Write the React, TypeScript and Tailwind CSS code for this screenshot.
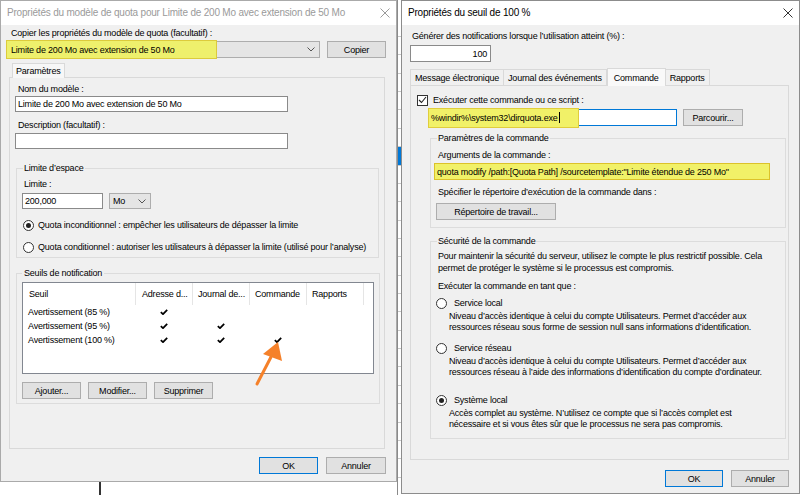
import type { ReactNode } from "react";

function CloseX({ color }: { color: string }) {
  return (
    <svg width="10" height="10" viewBox="0 0 10 10" className="ml-auto">
      <path d="M0.5 0.5 L9.5 9.5 M9.5 0.5 L0.5 9.5" stroke={color} strokeWidth="1" />
    </svg>
  );
}

function Chevron() {
  return (
    <svg width="8" height="5" viewBox="0 0 8 5">
      <path d="M0.5 0.5 L4 4 L7.5 0.5" stroke="#555" strokeWidth="1" fill="none" />
    </svg>
  );
}

function Tick() {
  return (
    <svg width="8" height="6" viewBox="0 0 8 6">
      <path d="M0.8 3.2 L3 5.2 L7.2 0.8" stroke="#000" strokeWidth="1.7" fill="none" />
    </svg>
  );
}

function Btn({ children, w, primary }: { children: ReactNode; w: string; primary?: boolean }) {
  return (
    <div
      className={`${w} h-[17px] flex items-center justify-center bg-[#e1e1e1] border ${
        primary ? "border-[#0078d7]" : "border-[#adadad]"
      }`}
    >
      {children}
    </div>
  );
}

function Radio({ on }: { on?: boolean }) {
  return (
    <span className="w-[11px] h-[11px] rounded-full border border-[#333] bg-white flex items-center justify-center shrink-0">
      {on && <span className="w-[5px] h-[5px] rounded-full bg-[#222]" />}
    </span>
  );
}

const runAs = [
  {
    label: "Service local",
    desc: [
      "Niveau d’accès identique à celui du compte Utilisateurs. Permet d’accéder aux",
      "ressources réseau sous forme de session null sans informations d’identification.",
    ],
    on: false,
    mt: "mt-[5px]",
  },
  {
    label: "Service réseau",
    desc: [
      "Niveau d’accès identique à celui du compte Utilisateurs. Permet d’accéder aux",
      "ressources réseau à l’aide des informations d’identification du compte d’ordinateur.",
    ],
    on: false,
    mt: "mt-[9px]",
  },
  {
    label: "Système local",
    desc: [
      "Accès complet au système. N’utilisez ce compte que si l’accès complet est",
      "nécessaire et si vous êtes sûr que le processus ne sera pas compromis.",
    ],
    on: true,
    mt: "mt-[16px]",
  },
];

export default function App() {
  return (
    <div className="relative w-[800px] h-[495px] bg-white flex overflow-hidden font-['Liberation_Sans',Arial,sans-serif] text-[9px] leading-[12px] tracking-[-0.2px] text-black">
      {/* left dialog */}
      <div className="flex flex-col shrink-0">
        <div className="w-[397px] h-[482px] border border-[#aaaaaa] bg-[#f0f0f0] flex flex-col">
          <div className="h-[24px] bg-white flex items-center pl-[6px] pr-[6px] text-[10px] tracking-[-0.2px] text-[#9a9a9a]">
            <span>Propriétés du modèle de quota pour Limite de 200 Mo avec extension de 50 Mo</span>
            <CloseX color="#9a9a9a" />
          </div>
          <div className="pl-[6px] flex flex-col">
            <div className="mt-[2px] pl-[4px]">Copier les propriétés du modèle de quota (facultatif) :</div>
            <div className="mt-[2px] flex">
              <div className="relative w-[313px] h-[17px] bg-[#e5e5e5] border border-[#adadad] flex items-center pr-[4px]">
                <span className="absolute left-[-2px] top-[-2px] w-[211px] h-[19px] bg-[#eef06c] border border-[#dccb3c]" />
                <span className="relative pl-[3px]">Limite de 200 Mo avec extension de 50 Mo</span>
                <span className="ml-auto">
                  <Chevron />
                </span>
              </div>
              <div className="ml-[7px]">
                <Btn w="w-[59px]">Copier</Btn>
              </div>
            </div>

            {/* tabs */}
            <div className="mt-[5px] ml-[5px] flex">
              <div className="h-[15px] px-[3px] flex items-center bg-[#f7f7f7] border border-b-0 border-[#d9d9d9] -mb-px relative z-10">
                Paramètres
              </div>
            </div>
            <div className="ml-[2px] w-[376px] h-[372px] border border-[#d9d9d9] flex flex-col pl-[5px]">
              <div className="mt-[5px] pl-[3px]">Nom du modèle :</div>
              <div className="mt-[1px] w-[273px] h-[16px] bg-white border border-[#8a8a8a] flex items-center pl-[2px]">
                Limite de 200 Mo avec extension de 50 Mo
              </div>
              <div className="mt-[7px] pl-[3px]">Description (facultatif) :</div>
              <div className="mt-[2px] w-[273px] h-[16px] bg-white border border-[#8a8a8a]" />

              <fieldset className="mt-[13px] ml-[1px] w-[363px] h-[96px] border border-[#dcdcdc] px-[6px]">
                <legend className="px-[1px]">Limite d’espace</legend>
                <div className="mt-[4px] pl-[1px]">Limite :</div>
                <div className="mt-[3px] -ml-[1px] flex">
                  <div className="w-[81px] h-[16px] bg-white border border-[#8a8a8a] flex items-center pl-[2px]">
                    200,000
                  </div>
                  <div className="ml-[6px] w-[42px] h-[16px] bg-[#e5e5e5] border border-[#adadad] flex items-center pl-[3px] pr-[4px]">
                    Mo
                    <span className="ml-auto">
                      <Chevron />
                    </span>
                  </div>
                </div>
                <div className="mt-[10px] flex items-center gap-[4px]">
                  <Radio on />
                  <span>Quota inconditionnel : empêcher les utilisateurs de dépasser la limite</span>
                </div>
                <div className="mt-[10px] flex items-center gap-[4px]">
                  <Radio />
                  <span>Quota conditionnel : autoriser les utilisateurs à dépasser la limite (utilisé pour l’analyse)</span>
                </div>
              </fieldset>

              <fieldset className="mt-[9px] ml-[1px] w-[363px] h-[137px] border border-[#dcdcdc] px-[5px]">
                <legend className="px-[2px]">Seuils de notification</legend>
                <div className="mt-[3px] w-[352px] h-[92px] bg-white border border-[#828790] flex flex-col">
                  <div className="h-[22px] flex">
                    <div className="w-[113px] pl-[6px] flex items-center border-r border-[#e5e5e5]">Seuil</div>
                    <div className="w-[57px] pl-[6px] flex items-center border-r border-[#e5e5e5]">Adresse d...</div>
                    <div className="w-[57px] pl-[5px] flex items-center border-r border-[#e5e5e5]">Journal de...</div>
                    <div className="w-[57px] pl-[5px] flex items-center border-r border-[#e5e5e5]">Commande</div>
                    <div className="w-[57px] pl-[5px] flex items-center border-r border-[#e5e5e5]">Rapports</div>
                  </div>
                  {[
                    ["Avertissement (85 %)", true, false, false],
                    ["Avertissement (95 %)", true, true, false],
                    ["Avertissement (100 %)", true, true, true],
                  ].map(([label, a, b, c], i) => (
                    <div key={i} className="h-[14px] flex items-center">
                      <div className="w-[113px] pl-[5px]">{label}</div>
                      <div className="w-[57px] pl-[24px]">{a && <Tick />}</div>
                      <div className="w-[57px] pl-[24px]">{b && <Tick />}</div>
                      <div className="w-[57px] pl-[24px]">{c && <Tick />}</div>
                    </div>
                  ))}
                </div>
                <div className="mt-[8px] flex gap-[7px]">
                  <Btn w="w-[59px]">Ajouter...</Btn>
                  <Btn w="w-[59px]">Modifier...</Btn>
                  <Btn w="w-[59px]">Supprimer</Btn>
                </div>
              </fieldset>
            </div>
            <div className="mt-[8px] ml-[2px] w-[377px] flex justify-end gap-[8px]">
              <Btn w="w-[59px]" primary>
                OK
              </Btn>
              <Btn w="w-[60px]">Annuler</Btn>
            </div>
          </div>
        </div>
        <div className="flex-1 relative">
          <div className="absolute left-[99px] top-0 w-[2px] h-full bg-[#333]" />
        </div>
      </div>

      {/* background window strip */}
      <div className="w-[4px] h-[495px] shrink-0 border-l border-[#8a8a8a] flex flex-col pt-[36px]">
        {Array.from({ length: 25 }).map((_, i) => (
          <div key={i} className={`h-[19.5px] border-t border-[#c8c8c8] ${i === 6 ? "bg-[#0078d7]" : ""}`} />
        ))}
      </div>

      {/* right dialog */}
      <div className="w-[399px] h-[494px] shrink-0 border border-[#8c8c8c] bg-[#f0f0f0] flex flex-col">
        <div className="h-[24px] bg-white flex items-center pl-[6px] pr-[6px] text-[10px] tracking-[-0.2px]">
          <span>Propriétés du seuil de 100 %</span>
          <CloseX color="#333" />
        </div>
        <div className="pl-[8px] flex flex-col">
          <div className="mt-[5px] pl-[2px]">Générer des notifications lorsque l’utilisation atteint (%) :</div>
          <div className="mt-[3px] w-[81px] h-[17px] bg-white border border-[#8a8a8a] flex items-center justify-end pr-[3px]">
            100
          </div>

          {/* tabs */}
          <div className="mt-[5px] h-[18px] flex items-end">
            <div className="h-[16px] px-[4px] flex items-center border border-b-0 border-[#d9d9d9] bg-[#f0f0f0]">
              Message électronique
            </div>
            <div className="h-[16px] px-[4px] flex items-center border border-b-0 border-l-0 border-[#d9d9d9] bg-[#f0f0f0]">
              Journal des événements
            </div>
            <div className="h-[18px] px-[6px] flex items-center border border-b-0 border-[#d9d9d9] bg-[#f9f9f9] -mb-px relative z-10">
              Commande
            </div>
            <div className="h-[16px] px-[4px] flex items-center border border-b-0 border-l-0 border-[#d9d9d9] bg-[#f0f0f0]">
              Rapports
            </div>
          </div>
          <div className="w-[379px] h-[375px] border border-[#d9d9d9] flex flex-col">
            <div className="mt-[8px] pl-[6px] flex items-center gap-[5px]">
              <span className="w-[11px] h-[11px] border border-[#333] bg-white flex items-center justify-center">
                <svg width="9" height="8" viewBox="0 0 9 8">
                  <path d="M1 4 L3.5 6.5 L8 1" stroke="#222" strokeWidth="1.1" fill="none" />
                </svg>
              </span>
              <span>Exécuter cette commande ou ce script :</span>
            </div>
            <div className="mt-[3px] ml-[17px] flex">
              <div className="relative w-[249px] h-[17px] bg-white border border-[#0078d7] flex items-center">
                <span className="absolute left-[-1px] top-[-2px] w-[151px] h-[20px] bg-[#f1f168] border border-[#e0cd3c]" />
                <span className="relative pl-[2px]">%windir%\system32\dirquota.exe</span>
                <span className="relative w-px h-[11px] bg-black ml-[1px]" />
              </div>
              <div className="ml-[6px]">
                <Btn w="w-[60px]">Parcourir...</Btn>
              </div>
            </div>

            <fieldset className="mt-[6px] ml-[19px] w-[356px] h-[96px] border border-[#dcdcdc] px-[6px]">
              <legend className="px-[1px]">Paramètres de la commande</legend>
              <div className="mt-[5px] pl-[1px]">Arguments de la commande :</div>
              <div className="mt-[2px] -ml-[3px] w-[336px] h-[17px] bg-[#f1f168] border border-[#dcc22a] flex items-center pl-[2px]">
                quota modify /path:[Quota Path] /sourcetemplate:"Limite étendue de 250 Mo"
              </div>
              <div className="mt-[6px] pl-[1px]">Spécifier le répertoire d’exécution de la commande dans :</div>
              <div className="mt-[5px] -ml-[1px]">
                <Btn w="w-[120px]">Répertoire de travail...</Btn>
              </div>
            </fieldset>

            <fieldset className="mt-[7px] ml-[19px] w-[356px] h-[204px] border border-[#dcdcdc] px-[6px]">
              <legend className="px-[1px]">Sécurité de la commande</legend>
              <div className="mt-[4px] pl-[1px] leading-[11.5px]">
                Pour maintenir la sécurité du serveur, utilisez le compte le plus restrictif possible. Cela
                <br />
                permet de protéger le système si le processus est compromis.
              </div>
              <div className="mt-[6px] pl-[1px]">Exécuter la commande en tant que :</div>
              {runAs.map((r) => (
                <div key={r.label} className={r.mt}>
                  <div className="flex items-center gap-[7px] -ml-[1px]">
                    <Radio on={r.on} />
                    <span>{r.label}</span>
                  </div>
                  <div className="mt-[2px] pl-[12px] leading-[11px]">
                    {r.desc[0]}
                    <br />
                    {r.desc[1]}
                  </div>
                </div>
              ))}
            </fieldset>
          </div>
          <div className="mt-[10px] w-[379px] flex justify-end gap-[8px]">
            <Btn w="w-[58px]" primary>
              OK
            </Btn>
            <Btn w="w-[58px]">Annuler</Btn>
          </div>
        </div>
      </div>

      {/* orange annotation arrow */}
      <svg className="absolute left-0 top-0 pointer-events-none" width="800" height="495">
        <path d="M257 384 L271 357" stroke="#f5812a" strokeWidth="3" strokeLinecap="round" />
        <path d="M278 342 L263 354 L282 361 Z" fill="#f5812a" />
      </svg>
    </div>
  );
}
